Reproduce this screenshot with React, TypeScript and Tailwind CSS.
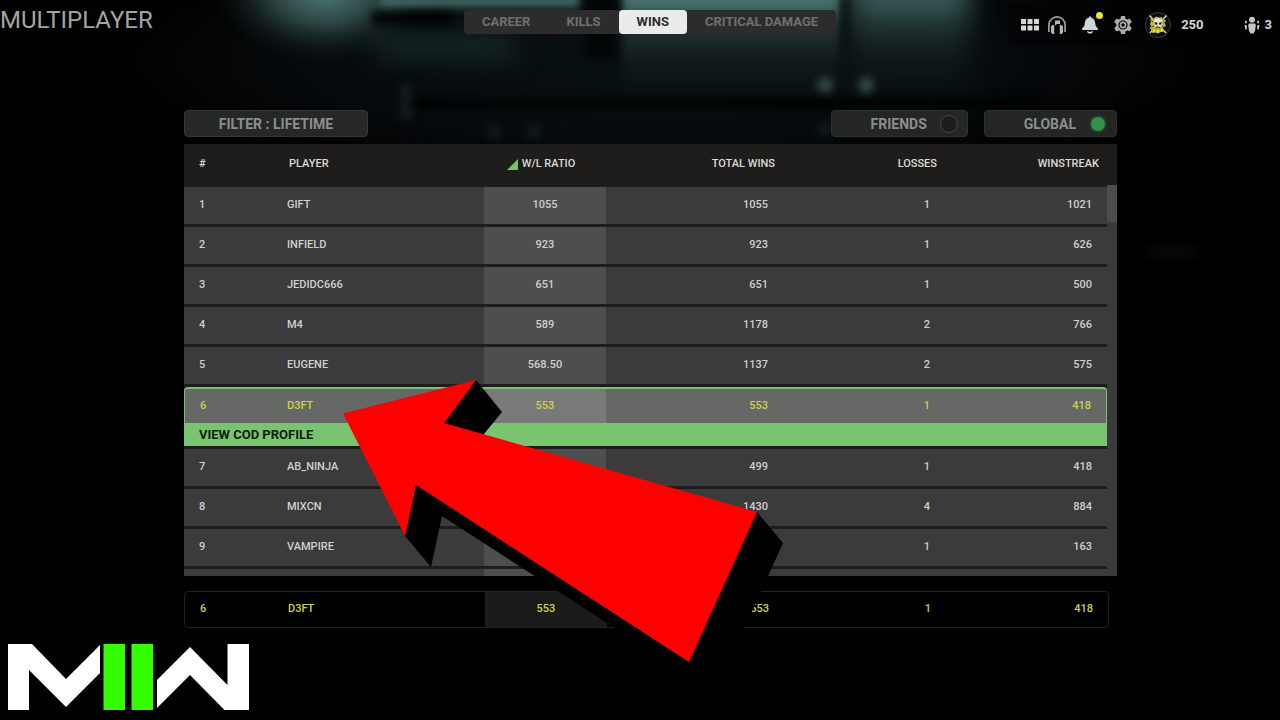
import { useState } from "react";

type Row = {
  rank: number;
  player: string;
  ratio: string;
  wins: number;
  losses: number;
  streak: number;
};

const tabs = ["CAREER", "KILLS", "WINS", "CRITICAL DAMAGE"];

const rows: Row[] = [
  { rank: 1, player: "GIFT", ratio: "1055", wins: 1055, losses: 1, streak: 1021 },
  { rank: 2, player: "INFIELD", ratio: "923", wins: 923, losses: 1, streak: 626 },
  { rank: 3, player: "JEDIDC666", ratio: "651", wins: 651, losses: 1, streak: 500 },
  { rank: 4, player: "M4", ratio: "589", wins: 1178, losses: 2, streak: 766 },
  { rank: 5, player: "EUGENE", ratio: "568.50", wins: 1137, losses: 2, streak: 575 },
  { rank: 6, player: "D3FT", ratio: "553", wins: 553, losses: 1, streak: 418 },
  { rank: 7, player: "AB_NINJA", ratio: "499", wins: 499, losses: 1, streak: 418 },
  { rank: 8, player: "MIXCN", ratio: "477", wins: 1430, losses: 4, streak: 884 },
  { rank: 9, player: "VAMPIRE", ratio: "467", wins: 467, losses: 1, streak: 163 },
];

const me = rows[5];

function Backdrop() {
  return (
    <svg
      className="absolute inset-x-0 top-0 -z-10 h-[320px] w-full"
      viewBox="0 0 1280 320"
      preserveAspectRatio="none"
      aria-hidden="true"
    >
      <defs>
        <filter id="soft" x="-50%" y="-150%" width="200%" height="400%" colorInterpolationFilters="sRGB">
          <feGaussianBlur stdDeviation="14" />
        </filter>
        <filter id="tight" x="-50%" y="-150%" width="200%" height="400%" colorInterpolationFilters="sRGB">
          <feGaussianBlur stdDeviation="4" />
        </filter>
        <linearGradient id="fade" x1="0" y1="0" x2="0" y2="1">
          <stop offset="0" stopColor="#56857f" />
          <stop offset="0.15" stopColor="#456d69" />
          <stop offset="0.35" stopColor="#213534" />
          <stop offset="0.65" stopColor="#111a1a" />
          <stop offset="1" stopColor="#070d0e" />
        </linearGradient>
        <radialGradient id="haze">
          <stop offset="0" stopColor="#0a1214" />
          <stop offset="0.6" stopColor="#060a0c" />
          <stop offset="1" stopColor="#060a0c" stopOpacity="0" />
        </radialGradient>
        <radialGradient id="lamp">
          <stop offset="0" stopColor="#4f7a75" />
          <stop offset="0.45" stopColor="#2a4341" />
          <stop offset="1" stopColor="#0a1212" stopOpacity="0" />
        </radialGradient>
      </defs>
      <ellipse cx="660" cy="60" rx="560" ry="130" fill="url(#haze)" />
      <ellipse cx="325" cy="-8" rx="115" ry="72" fill="url(#lamp)" />
      <rect x="380" y="-6" width="200" height="14" fill="#3f6460" filter="url(#tight)" />
      <rect x="375" y="36" width="140" height="20" fill="#1b302f" filter="url(#soft)" />
      <rect x="622" y="-14" width="218" height="116" fill="url(#fade)" filter="url(#tight)" />
      <rect x="850" y="-20" width="120" height="120" fill="url(#fade)" opacity="0.9" filter="url(#soft)" />
      <rect x="372" y="12" width="80" height="13" fill="#020404" filter="url(#tight)" />
      <rect x="585" y="0" width="32" height="60" fill="#030606" filter="url(#tight)" />
      <rect x="842" y="0" width="7" height="90" fill="#0c1414" filter="url(#tight)" />
      <rect x="400" y="99" width="640" height="9" fill="#010202" filter="url(#tight)" />
      <g fill="#4b706c" opacity="0.6" filter="url(#tight)">
        <circle cx="825" cy="85" r="8" />
        <circle cx="866" cy="85" r="8" />
      </g>
      <g fill="#1d3232" opacity="0.5" filter="url(#tight)">
        <circle cx="494" cy="132" r="7" />
        <circle cx="534" cy="132" r="7" />
        <circle cx="825" cy="130" r="7" />
        <rect x="400" y="84" width="12" height="36" />
      </g>
      <ellipse cx="1172" cy="252" rx="30" ry="4" fill="#0a0c0c" filter="url(#tight)" />
    </svg>
  );
}

function GridIcon() {
  return (
    <svg width="20" height="20" viewBox="0 0 20 20" fill="#d3d6d6">
      <path d="M1 4h5v5H1zM7.500 4h5v5h-5zM14 4h5v5h-5zM1 10.500h5v5H1zM7.500 10.500h5v5h-5zM14 10.500h5v5h-5z" />
    </svg>
  );
}

function HeadsetIcon() {
  return (
    <svg width="20" height="20" viewBox="0 0 20 20">
      <path d="M1.900 17V10a8.100 8.100 0 0 1 16.200 0v7" fill="none" stroke="#9da2a2" strokeWidth="1.700" />
      <path d="M4 11l3.200-1.500V19H5.500L4 17.500zM16 11l-3.200-1.500V19h1.700l1.500-1.500z" fill="#b3b7b7" />
      <path d="M8 5.500h5V9H9.800L8 10.500z" fill="#b3b7b7" />
    </svg>
  );
}

function BellIcon() {
  return (
    <svg width="20" height="20" viewBox="0 0 20 20" fill="#d3d6d6">
      <path d="M10 1.500c.8 0 1.300.5 1.300 1.200C14 3.300 15 5.500 15.200 8c.2 2.800.9 3.900 2.600 5.300V15H2.200v-1.700C3.900 11.900 4.600 10.800 4.800 8 5 5.500 6 3.300 8.700 2.700c0-.7.5-1.200 1.300-1.200z" />
      <path d="M6.800 16.200c.5 1.500 1.700 2.400 3.200 2.400s2.700-.9 3.200-2.400h-1.500c-.4.500-1 .8-1.700.8s-1.300-.3-1.700-.8z" />
    </svg>
  );
}

function GearIcon() {
  return (
    <svg width="20" height="20" viewBox="0 0 20 20">
      <path
        fill="#a9adad"
        fillRule="evenodd"
        d="M8 1h4l.6 2.700 1.500.9 2.700-.9 2 3.400-2.100 1.900v2l2.100 1.900-2 3.400-2.700-.9-1.500.9L12 19H8l-.6-2.700-1.500-.9-2.700.9-2-3.400L3.300 11V9L1.200 7.100l2-3.400 2.700.9 1.500-.9zM10 5.400a4.600 4.600 0 1 0 0 9.200 4.600 4.600 0 0 0 0-9.200z"
      />
      <circle cx="10" cy="10" r="2.600" fill="none" stroke="#a9adad" strokeWidth="1.600" />
    </svg>
  );
}

function SkullBadge() {
  return (
    <svg width="26" height="26" viewBox="0 0 26 26">
      <circle cx="13" cy="13" r="12.500" fill="#0b0c0b" stroke="#4b4e4b" strokeWidth="0.8" />
      <path d="M4.500 3.500L21 21M21.500 3.500L5 21" stroke="#dcdccb" strokeWidth="1.400" />
      <path d="M5 12l1-3-1-2 3.500-.5L11 4.500l3 1 3-.5.500 2.500 3.500.5-1.500 3 1.500 3-3 1.500.5 4-3 .5-2.500 1.500-3-1-3 .5-.5-3-2-1.500 1.500-2z" fill="#c0b22c" />
      <path d="M8.500 10.500c0-2.800 2-4.200 4.500-4.200s4.800 1.400 4.800 4.200c0 1.800-.9 2.700-1.800 3.300l-.5 2.400h-4.700l-.5-2.400c-1-.6-1.800-1.500-1.800-3.300z" fill="#e8e6d4" />
      <path d="M9.500 10l3 .7-.4 2-2.200-.2zM16.700 10l-2.700.7.300 2 2-.2zM12.700 13.200l.9 1.600h-1.500z" fill="#1a1a12" />
      <path d="M8 17.500l2 .5v2.500l-2-.8zM12 18h2v3l-2-.5zM16 17.500l2-.5-.6 2.800-1.400.3z" fill="#f0df45" />
      <path d="M10.500 15.500h5M11.500 14.700v2M14.500 14.700v2" stroke="#35320f" strokeWidth="0.7" />
      <path d="M6.500 8.500l1.500 1.500M19 9.500l-1.500 1.500M6.500 15l2-1M19 15.500l-2-1.500" stroke="#4c4610" strokeWidth="1" />
    </svg>
  );
}

function PartyIcon() {
  return (
    <svg width="18" height="20" viewBox="0 0 18 20" fill="#c3c6c6">
      <circle cx="9" cy="4.800" r="3" />
      <path d="M5.800 8.600h6.400l.6 2-.8 5.400-1.500 2.500h-3L6 16l-.8-5.400z" />
      <path d="M2 5.800h1.800v2.400H2zM14.200 5.800H16v2.400h-1.800zM1.500 10h2l.5 2.500-.6 2H2.200zM16.500 10h-2l-.5 2.500.6 2h1.200z" />
    </svg>
  );
}

function Columns() {
  return (
    <colgroup>
      <col className="w-[88px]" />
      <col className="w-[212px]" />
      <col className="w-[122px]" />
      <col className="w-[177px]" />
      <col />
      <col />
    </colgroup>
  );
}

function PlayerRow({ row }: { row: Row }) {
  return (
    <tr className="h-10 text-[#d0d0d0] [&>td]:border-b-[3px] [&>td]:border-[#1e1d1b] [&>td]:bg-[#3b3b3b]">
      <td className="pl-[15px]">{row.rank}</td>
      <td className="pl-[15px]">{row.player}</td>
      <td className="bg-[#4e4e4e]! text-center">{row.ratio}</td>
      <td className="pr-[15px] text-right">{row.wins}</td>
      <td className="pr-[15px] text-right">{row.losses}</td>
      <td className="pr-[15px] text-right">{row.streak}</td>
    </tr>
  );
}

function SelectedRow({ row }: { row: Row }) {
  return (
    <>
      <tr className="h-9 text-[#d2cf4f] [&>td]:border-t-2 [&>td]:border-[#79c270] [&>td]:bg-[#666866]">
        <td className="rounded-tl-sm border-l pl-[15px]">{row.rank}</td>
        <td className="pl-[15px]">{row.player}</td>
        <td className="bg-[#787978]! text-center">{row.ratio}</td>
        <td className="pr-[15px] text-right">{row.wins}</td>
        <td className="pr-[15px] text-right">{row.losses}</td>
        <td className="rounded-tr-sm border-r pr-[15px] text-right">{row.streak}</td>
      </tr>
      <tr className="h-[26px]">
        <td colSpan={6} className="border-b-[3px] border-[#1e1d1b] bg-[#7ac371]">
          <button className="block w-full pl-[15px] text-left text-[13px] leading-[23px] font-bold text-[#10200f]">
            VIEW COD PROFILE
          </button>
        </td>
      </tr>
    </>
  );
}

export default function App() {
  const [tab, setTab] = useState("WINS");
  const [scope, setScope] = useState("GLOBAL");

  return (
    <div className="relative isolate min-h-screen overflow-hidden bg-black font-[Roboto,sans-serif]">
      <Backdrop />

      <header className="grid h-[110px] grid-cols-[1fr_auto_1fr] items-start">
        <h1 className="pt-1 text-2xl leading-8 text-[#a3a5a5]">MULTIPLAYER</h1>

        <nav className="mt-[10px] ml-5 flex h-6 rounded-sm bg-[#2c2c2c]">
          {tabs.map((name) => (
            <button
              key={name}
              onClick={() => setTab(name)}
              className={
                name === tab
                  ? "rounded-sm bg-[#ebebeb] px-[18px] text-[13px] leading-6 font-bold text-[#2d2d2d]"
                  : "px-[18px] text-[13px] leading-6 font-bold text-[#6f6f6f]"
              }
            >
              {name}
            </button>
          ))}
        </nav>

        <div className="mt-[5px] flex h-10 items-center justify-end pr-2 text-[13px] font-bold text-[#d6d8d8]">
          <div className="flex h-full items-center bg-black/30 pr-6 pl-3">
            <button aria-label="Menu">
              <GridIcon />
            </button>
            <button aria-label="Audio" className="ml-[7px]">
              <HeadsetIcon />
            </button>
            <button aria-label="Notifications" className="relative ml-[13px]">
              <BellIcon />
              <span className="absolute -top-[3px] -right-[3px] size-[7px] rounded-full bg-[#e9e43e]" />
            </button>
            <button aria-label="Settings" className="ml-[13px]">
              <GearIcon />
            </button>
            <button aria-label="Profile" className="ml-3">
              <SkullBadge />
            </button>
            <span className="ml-[10px]">250</span>
          </div>
          <div className="ml-[15px] flex items-center gap-1">
            <PartyIcon />
            <span>3</span>
          </div>
        </div>
      </header>

      <main className="relative mx-auto w-full max-w-[954px] pl-[21px]">
        <div className="flex gap-4 text-sm font-bold text-[#8b8f8b]">
          <button className="mr-auto h-[27px] w-[184px] rounded-sm border border-[#343636] bg-[#262727] leading-6">
            FILTER : LIFETIME
          </button>
          {["FRIENDS", "GLOBAL"].map((name) => (
            <label
              key={name}
              className="flex h-[27px] items-center gap-[13px] rounded-sm border border-[#2f3131] bg-[#242525] pr-[9px] pl-[39px]"
            >
              {name}
              <input
                type="radio"
                name="scope"
                checked={scope === name}
                onChange={() => setScope(name)}
                className="size-[18px] appearance-none rounded-full border border-[#454545] bg-[#1c1c1c] checked:border-2 checked:border-[#25402b] checked:bg-[#369049]"
              />
            </label>
          ))}
        </div>

        <section className="mt-[7px] flex h-[432px] overflow-hidden bg-[#1e1d1b]">
          <table className="w-full table-fixed border-separate border-spacing-0 self-start text-[11px] font-medium">
            <Columns />
            <thead>
              <tr className="h-[43px] text-[#dadada] [&>th]:pb-0.5 [&>th]:font-medium">
                <th className="pl-[15px] text-left">#</th>
                <th className="pl-[17px] text-left">PLAYER</th>
                <th>
                  <span className="flex items-center justify-center gap-1 pr-2">
                    <svg width="11" height="11" viewBox="0 0 11 11" aria-hidden="true">
                      <path d="M11 0v11H0z" fill="#79c270" />
                    </svg>
                    W/L RATIO
                  </span>
                </th>
                <th className="pr-2 text-right">TOTAL WINS</th>
                <th className="pr-2 text-right">LOSSES</th>
                <th className="pr-2 text-right">WINSTREAK</th>
              </tr>
            </thead>
            <tbody>
              {rows.map((row) =>
                row.rank === me.rank ? (
                  <SelectedRow key={row.rank} row={row} />
                ) : (
                  <PlayerRow key={row.rank} row={row} />
                )
              )}
              {/* top edge of the next row, cut off by the scroll area */}
              <tr className="h-2 [&>td]:bg-[#3b3b3b]">
                <td colSpan={2} />
                <td className="bg-[#4e4e4e]!" />
                <td colSpan={3} />
              </tr>
            </tbody>
          </table>
          <div className="mt-[41px] w-[10px] shrink-0 bg-[#3b3b3b]">
            <div className="h-[37px] bg-[#4d4d4d]" />
          </div>
        </section>

        <section className="mt-[15px] mr-2 rounded-sm border border-[#222222] bg-black">
          <table className="w-full table-fixed border-separate border-spacing-0 text-[11px] font-medium">
            <Columns />
            <tbody>
              <tr className="h-[35px] text-[#d2cf4f]">
                <td className="pl-[15px]">{me.rank}</td>
                <td className="pl-[15px]">{me.player}</td>
                <td className="bg-[#1b1b1b] text-center">{me.ratio}</td>
                <td className="pr-[15px] text-right">{me.wins}</td>
                <td className="pr-[15px] text-right">{me.losses}</td>
                <td className="pr-[15px] text-right">{me.streak}</td>
              </tr>
            </tbody>
          </table>
        </section>

        {/* pointer over the selected player */}
        <svg
          className="pointer-events-none absolute top-[270px] left-[180px]"
          width="442"
          height="314"
          viewBox="343 380 442 314"
          aria-hidden="true"
        >
          <path
            d="M476 380L502 412L484 434L480 445L745 520L757 512L783 543L715 693L442 516L431 567L405 536L416 485L444 423z"
            fill="#000"
          />
          <path d="M343 413.500L476 380L444 423L757 512L689 662L416 485L405 536z" fill="#f00" />
        </svg>
      </main>

      <footer className="mt-4 pl-2">
        <svg width="241" height="66" viewBox="0 0 241 66" role="img" aria-label="Modern Warfare II">
          <path d="M0 0h24l34 35L92 1v28L58 63 21 26v40H0z" fill="#fff" />
          <path d="M95.500 0h21.500v66H95.500zM123.500 0H145v66h-21.500z" fill="#3f0" />
          <path d="M149 36l33-33 37.500 38V0H241v66h-24.500L182 31l-33 33z" fill="#fff" />
        </svg>
      </footer>
    </div>
  );
}
